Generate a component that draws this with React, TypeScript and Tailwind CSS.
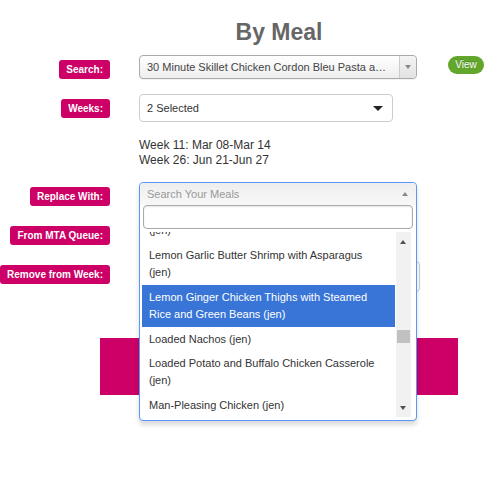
import React from 'react';

type Result = { lines: string[]; active?: boolean };

const results: Result[] = [
  { lines: ['Lemon Garlic Butter Salmon with Broccoli', '(jen)'] },
  { lines: ['Lemon Garlic Butter Shrimp with Asparagus', '(jen)'] },
  { lines: ['Lemon Ginger Chicken Thighs with Steamed', 'Rice and Green Beans (jen)'], active: true },
  { lines: ['Loaded Nachos (jen)'] },
  { lines: ['Loaded Potato and Buffalo Chicken Casserole', '(jen)'] },
  { lines: ['Man-Pleasing Chicken (jen)'] },
  { lines: ['Mexican Chicken Casserole (jen)'] },
];

const Label = ({ text }: { text: string }) => (
  <div className="w-[110px] shrink-0 flex justify-end pt-[5px]">
    <span className="h-[19px] px-[7px] rounded-[3px] bg-[#cc0066] text-white text-[10px] font-bold leading-[19px] whitespace-nowrap">
      {text}
    </span>
  </div>
);

const Dropdown = () => (
  <div className="absolute top-0 left-0 w-[278px] h-[239px] bg-white border border-[#5897fb] rounded-[4px] shadow-[0_4px_5px_rgba(0,0,0,0.15)] flex flex-col">
    {/* head */}
    <div className="h-[22px] shrink-0 flex items-center justify-between pl-[7px] pr-[8px] bg-gradient-to-b from-[#eeeeee] to-[#f8f8f8] rounded-t-[4px]">
      <span className="text-[11px] text-[#999]">Search Your Meals</span>
      <span className="w-0 h-0 border-x-[3px] border-x-transparent border-b-[4px] border-b-[#888]" />
    </div>
    {/* search input */}
    <div className="mx-[3px] h-[24px] shrink-0 border border-[#aaa] rounded-[4px] bg-white shadow-[inset_0_1px_2px_rgba(0,0,0,0.1)]" />
    {/* results */}
    <div className="mt-[3px] h-[185px] flex">
      <div className="ml-[2px] w-[253px] h-[185px] overflow-hidden">
        <div className="-mt-[31px]">
          {results.map((r, i) => (
            <div
              key={i}
              className={`px-[7px] text-[11px] leading-[17px] ${r.lines.length > 1 ? 'py-[4px]' : 'pt-[4px] pb-[3px]'} ${r.active ? 'bg-[#3875d7] text-white' : 'text-[#333]'}`}
            >
              {r.lines.map((l, j) => (
                <div key={j} className="whitespace-nowrap">{l}</div>
              ))}
            </div>
          ))}
        </div>
      </div>
      {/* scrollbar */}
      <div className="ml-[1px] w-[15px] h-[185px] bg-[#f1f1f1] relative">
        <span className="absolute top-[8px] left-[4px] w-0 h-0 border-x-[3.5px] border-x-transparent border-b-[4px] border-b-[#505050]" />
        <div className="absolute top-[98px] left-[1px] w-[13px] h-[13px] bg-[#c1c1c1]" />
        <span className="absolute bottom-[7px] left-[4px] w-0 h-0 border-x-[3.5px] border-x-transparent border-t-[4px] border-t-[#505050]" />
      </div>
    </div>
  </div>
);

export default function App() {
  return (
    <div className="w-[500px] h-[500px] bg-white overflow-hidden font-['Liberation_Sans',Arial,sans-serif]">
      <h1 className="pt-[20px] pl-[58px] text-center text-[23px] leading-[24px] font-bold text-[#666]">By Meal</h1>

      {/* Search */}
      <div className="mt-[11px] flex">
        <Label text="Search:" />
        <div className="ml-[29px] w-[278px] h-[24px] flex border border-[#aaa] rounded-[4px] bg-gradient-to-b from-white to-[#eeeeee] shadow-[0_1px_1px_rgba(0,0,0,0.06)]">
          <div className="flex-1 min-w-0 pl-[7px] pr-[10px] text-[11px] leading-[22px] text-[#444] truncate">
            30 Minute Skillet Chicken Cordon Bleu Pasta and Broccoli
          </div>
          <div className="w-[17px] shrink-0 border-l border-[#ccc] bg-gradient-to-b from-[#f4f4f4] to-[#e2e2e2] rounded-r-[4px] flex items-center justify-center">
            <span className="w-0 h-0 border-x-[3px] border-x-transparent border-t-[4px] border-t-[#888]" />
          </div>
        </div>
        <button className="ml-[31px] mt-[1px] w-[36px] h-[18px] rounded-full bg-[#62a72b] text-white text-[10px] leading-[18px] [text-shadow:0_-1px_0_rgba(0,0,0,0.25)]">
          View
        </button>
      </div>

      {/* Weeks */}
      <div className="mt-[15px] flex">
        <Label text="Weeks:" />
        <div className="ml-[29px] w-[254px] h-[28px] flex items-center justify-between pl-[7px] pr-[9px] border border-[#ccc] rounded-[4px] bg-white">
          <span className="text-[11px] text-[#333]">2 Selected</span>
          <span className="w-0 h-0 border-x-[5px] border-x-transparent border-t-[5px] border-t-[#222]" />
        </div>
      </div>

      <div className="mt-[16px] ml-[139px] text-[12px] leading-[15px] text-[#333]">
        <div>Week 11: Mar 08-Mar 14</div>
        <div>Week 26: Jun 21-Jun 27</div>
      </div>

      {/* Replace With */}
      <div className="mt-[14px] flex relative z-10">
        <Label text="Replace With:" />
        <div className="ml-[29px] w-[278px] h-[24px] relative">
          <Dropdown />
        </div>
      </div>

      {/* From MTA Queue */}
      <div className="mt-[15px] flex">
        <Label text="From MTA Queue:" />
        <div className="ml-[29px] w-[278px] h-[24px]" />
      </div>

      {/* Remove from Week */}
      <div className="mt-[16px] flex">
        <div className="w-[110px] shrink-0 flex justify-end pt-[4px]">
          <span className="h-[19px] px-[7px] rounded-[3px] bg-[#cc0066] text-white text-[10px] font-bold leading-[19px] whitespace-nowrap">
            Remove from Week:
          </span>
        </div>
        <div className="ml-[29px] w-[281px] h-[31px] border border-[#ccc] rounded-[4px] bg-white" />
      </div>

      <div className="mt-[46px] ml-[100px] w-[358px] h-[57px] bg-[#cc0066]" />
    </div>
  );
}
